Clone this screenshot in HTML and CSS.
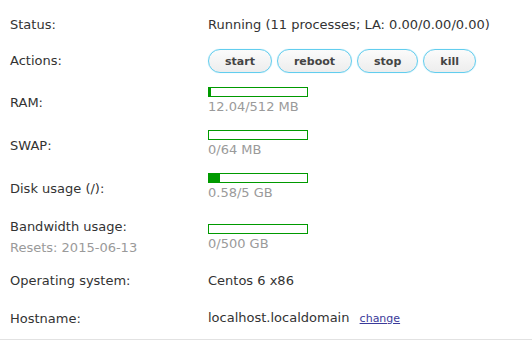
FILE: index.html
```html
<!DOCTYPE html>
<html>
<head>
<meta charset="utf-8">
<link rel="stylesheet" href="styles.css">
</head>
<body>
<div class="panel">
  <div class="row">
    <div class="label">Status:</div>
    <div class="value">Running (11 processes; LA: 0.00/0.00/0.00)</div>
  </div>
  <div class="row actions">
    <div class="label">Actions:</div>
    <div class="value buttons">
      <button class="btn">start</button>
      <button class="btn">reboot</button>
      <button class="btn">stop</button>
      <button class="btn">kill</button>
    </div>
  </div>
  <div class="row meter">
    <div class="label">RAM:</div>
    <div class="value usage">
      <div class="bar"><div class="fill" style="width: 2.35%"></div></div>
      <div class="note">12.04/512 MB</div>
    </div>
  </div>
  <div class="row meter">
    <div class="label">SWAP:</div>
    <div class="value usage">
      <div class="bar"><div class="fill" style="width: 0%"></div></div>
      <div class="note">0/64 MB</div>
    </div>
  </div>
  <div class="row meter">
    <div class="label">Disk usage (/):</div>
    <div class="value usage">
      <div class="bar"><div class="fill" style="width: 11.6%"></div></div>
      <div class="note">0.58/5 GB</div>
    </div>
  </div>
  <div class="row meter bandwidth">
    <div class="label">
      <div>Bandwidth usage:</div>
      <div class="note resets">Resets: 2015-06-13</div>
    </div>
    <div class="value usage">
      <div class="bar"><div class="fill" style="width: 0%"></div></div>
      <div class="note">0/500 GB</div>
    </div>
  </div>
  <div class="row">
    <div class="label">Operating system:</div>
    <div class="value">Centos 6 x86</div>
  </div>
  <div class="row host">
    <div class="label">Hostname:</div>
    <div class="value">localhost.localdomain <a class="change" href="#">change</a></div>
  </div>
</div>
</body>
</html>
```

FILE: styles.css
```css
html, body {
  margin: 0;
  padding: 0;
  background: #ffffff;
}
body {
  font-family: "DejaVu Sans", Verdana, sans-serif;
  font-size: 13px;
  line-height: 16px;
  color: #333333;
}
.panel {
  padding-top: 8px;
  border-bottom: 1px solid #e2e2e2;
}
.row {
  display: grid;
  grid-template-columns: 198px 1fr;
  align-items: center;
  padding: 9px 0 9px 10px;
}
.row.actions {
  padding-top: 7px;
  padding-bottom: 7px;
}
.row.meter {
  padding-top: 7px;
  padding-bottom: 8px;
}
.row.meter .label {
  padding-top: 4px;
}
.row.bandwidth {
  padding-top: 10px;
}
.row.bandwidth .label {
  padding-top: 0;
}
.row.host {
  padding-top: 12px;
  padding-bottom: 12px;
}
.buttons {
  display: flex;
  gap: 5px;
}
.btn {
  font-family: "DejaVu Sans", Verdana, sans-serif;
  font-size: 11px;
  font-weight: bold;
  color: #444444;
  height: 24px;
  padding: 0 16px;
  border: 1px solid #62cdee;
  border-radius: 12px;
  background: linear-gradient(#fbfbfb, #ededed);
  box-shadow: 0 0 1px #9be3f7;
}
.usage {
  display: flex;
  flex-direction: column;
  gap: 2px;
}
.bar {
  width: 98px;
  height: 8px;
  border: 1px solid #009a00;
  background: #ffffff;
}
.fill {
  height: 100%;
  background: #009a00;
}
.note {
  color: #9a9a9a;
}
.resets {
  margin-top: 5px;
}
.change {
  font-size: 11px;
  color: #3a3a9a;
  margin-left: 6px;
}
```
